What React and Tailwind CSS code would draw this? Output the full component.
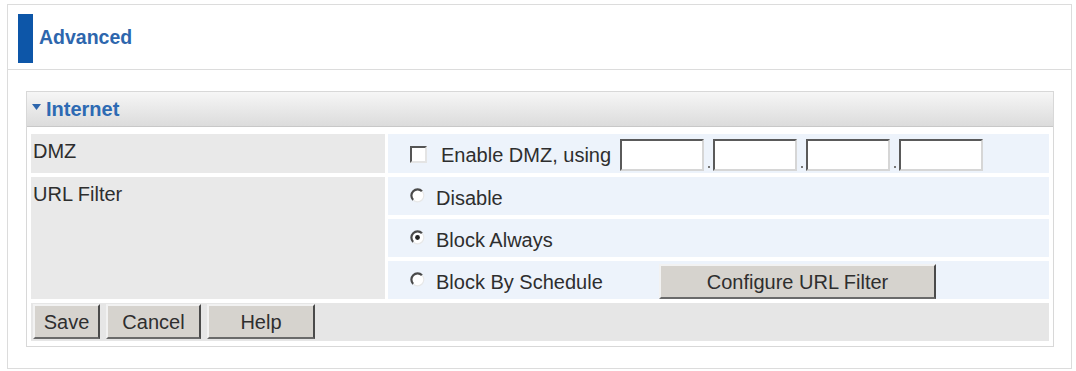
import React from "react";

const font = { fontFamily: '"Liberation Sans", Arial, sans-serif' };

const Radio = ({ checked }) => (
  <svg width="15" height="15" viewBox="0 0 15 15" className="shrink-0 mt-[-6px]">
    <circle cx="7.5" cy="7.5" r="6" fill="#ffffff" />
    <path d="M12 3.2 A6 6 0 0 0 3.2 12" fill="none" stroke="#4a4a4a" strokeWidth="2.2" />
    <path d="M3.2 12 A6 6 0 0 0 12 3.2" fill="none" stroke="#e8e8e8" strokeWidth="1.2" />
    {checked && <circle cx="7.5" cy="7.5" r="2.4" fill="#222" />}
  </svg>
);

const IpBox = () => (
  <input
    type="text"
    className="w-[84px] h-[32px] bg-white border-2 border-t-[#5a5a5a] border-l-[#5a5a5a] border-r-[#d6d6d6] border-b-[#d6d6d6] outline-none"
  />
);

const Dot = () => (
  <div className="w-[9px] h-[32px] flex items-end justify-center pb-[3px]">
    <div className="w-[2px] h-[2px] bg-[#777]" />
  </div>
);

const Btn = ({ children, className }) => (
  <button
    type="button"
    className={
      "h-[35px] bg-[#d6d3ce] text-[#2e2e2e] text-[20px] border-2 border-t-[#f2f2f2] border-l-[#f2f2f2] border-r-[#4a4a4a] border-b-[#6a6a6a] " +
      className
    }
  >
    {children}
  </button>
);

export default function App() {
  return (
    <div className="bg-white w-[1076px] h-[371px] pt-[4px] pl-[7px]" style={font}>
      <div className="w-[1065px] h-[365px] border border-[#dcdcdc]">
        {/* page title */}
        <div className="h-[65px] border-b border-[#dcdcdc] flex items-start pl-[10px] pt-[9px]">
          <div className="w-[15px] h-[49px] bg-[#0d56a8]" />
          <div className="ml-[6px] mt-[14px] text-[19.5px] font-bold text-[#2d66ad] leading-none">
            Advanced
          </div>
        </div>

        {/* panel */}
        <div className="ml-[18px] mt-[21px] w-[1028px] border border-[#d8d8d8]">
          <div className="h-[35px] bg-gradient-to-b from-[#f6f6f6] to-[#dcdcdc] border-b border-[#c8c8c8] flex items-center pl-[5px]">
            <svg width="9" height="6" viewBox="0 0 9 6" className="mt-[-4px]">
              <path d="M0 0 H9 L4.5 6 Z" fill="#2d66ad" />
            </svg>
            <span className="ml-[5px] text-[20px] font-bold text-[#2d6ab3]">Internet</span>
          </div>

          <div className="px-[4px] pt-[7px] pb-[5px]">
            <div className="grid grid-cols-[354px_1fr] gap-x-[3px] gap-y-[4px] text-[20px] text-[#2e2e2e]">
              <div className="h-[39px] bg-[#e9e9e9] pl-[2px] pt-[2px]">DMZ</div>
              <div className="h-[39px] bg-[#edf3fb] flex items-center pl-[22px] pt-[2px]">
                <div className="w-[210px] flex items-center">
                  <div className="w-[17px] h-[17px] bg-white border-2 border-t-[#555] border-l-[#555] border-r-[#e4e4e4] border-b-[#e4e4e4]" />
                  <span className="ml-[14px]">Enable DMZ, using</span>
                </div>
                <IpBox />
                <Dot />
                <IpBox />
                <Dot />
                <IpBox />
                <Dot />
                <IpBox />
              </div>

              <div className="row-span-3 bg-[#e9e9e9] pl-[2px] pt-[2px]">URL Filter</div>
              <div className="h-[38px] bg-[#edf3fb] flex items-center pl-[22px] pt-[4px]">
                <Radio />
                <span className="ml-[11px]">Disable</span>
              </div>
              <div className="h-[38px] bg-[#edf3fb] flex items-center pl-[22px] pt-[4px]">
                <Radio checked />
                <span className="ml-[11px]">Block Always</span>
              </div>
              <div className="h-[38px] bg-[#edf3fb] flex items-center pl-[22px]">
                <div className="w-[249px] flex items-center pt-[4px]">
                  <Radio />
                  <span className="ml-[11px]">Block By Schedule</span>
                </div>
                <Btn className="self-end w-[277px] h-[34px]">Configure URL Filter</Btn>
              </div>

              <div className="col-span-2 h-[38px] bg-[#e6e6e6] flex items-start pl-[2px] pt-[1px] gap-[6px]">
                <Btn className="w-[67px]">Save</Btn>
                <Btn className="w-[95px]">Cancel</Btn>
                <Btn className="w-[108px]">Help</Btn>
              </div>
            </div>
          </div>
        </div>
      </div>
    </div>
  );
}
